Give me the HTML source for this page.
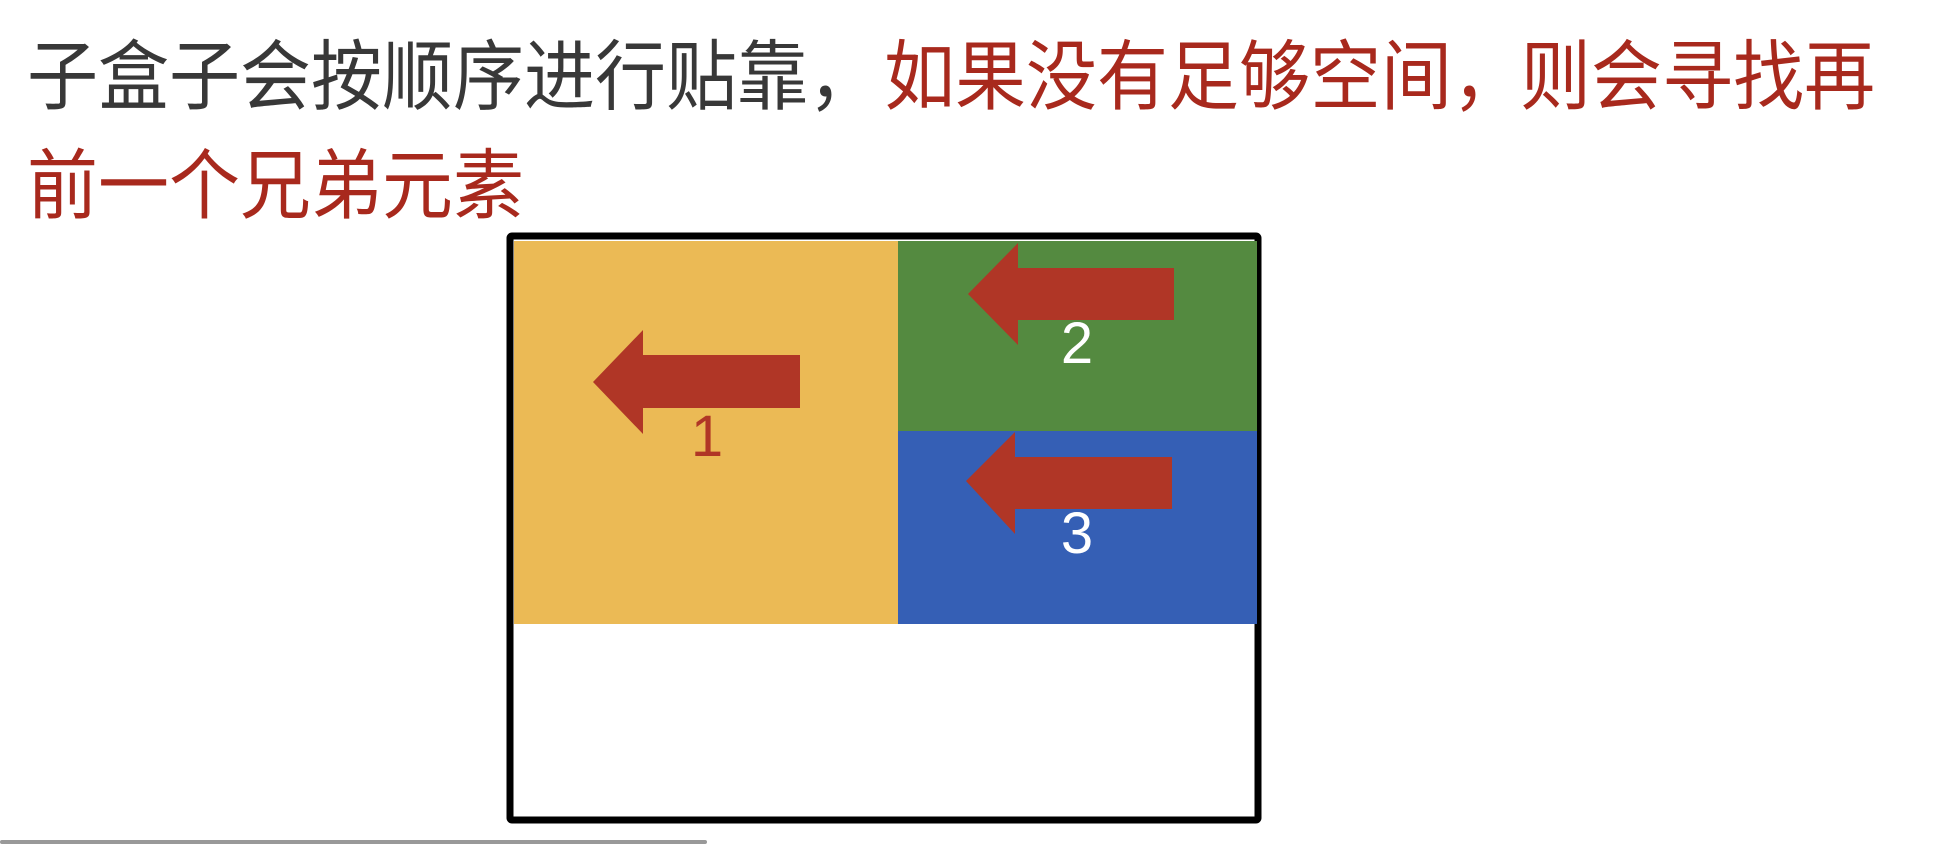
<!DOCTYPE html>
<html><head><meta charset="utf-8"><style>
html,body{margin:0;padding:0;background:#fff;width:1946px;height:844px;overflow:hidden;position:relative}
.t{position:absolute;font-family:"Noto Sans CJK SC","Liberation Sans",sans-serif;font-size:71px;line-height:100px;white-space:nowrap;color:#383838;transform:scaleY(1.08);transform-origin:0 50%}
.r{color:#a8291d}
</style></head><body>
<div class="t" style="left:27px;top:21px">子盒子会按顺序进行贴靠，</div>
<div class="t r" style="left:884px;top:21px">如果没有足够空间，</div>
<div class="t r" style="left:1520px;top:21px">则会寻找再</div>
<div class="t r" style="left:27px;top:130px">前一个兄弟元素</div>
<svg width="1946" height="844" style="position:absolute;left:0;top:0">
<rect x="510" y="236" width="748" height="584" fill="#fff" stroke="#000" stroke-width="7" rx="2"/>
<rect x="514" y="241" width="384" height="383" fill="#ebba55"/>
<rect x="898" y="241" width="359" height="190" fill="#548a40"/>
<rect x="898" y="431" width="359" height="193" fill="#355fb5"/>
<g font-family="Liberation Sans, DejaVu Sans, sans-serif" font-size="58" text-anchor="middle">
<text x="707" y="456" fill="#b03626">1</text>
<text x="1077" y="363" fill="#fff">2</text>
<text x="1077" y="553" fill="#fff">3</text>
</g>
<g fill="#b03626">
<polygon points="593,382 643,330 643,355 800,355 800,408 643,408 643,434"/>
<polygon points="968,294 1018,243 1018,268 1174,268 1174,320 1018,320 1018,345"/>
<polygon points="966,481 1015,432 1015,457 1172,457 1172,509 1015,509 1015,534"/>
</g>
<rect x="0" y="840" width="707" height="4" fill="#999" rx="2"/>
</svg>
</body></html>
